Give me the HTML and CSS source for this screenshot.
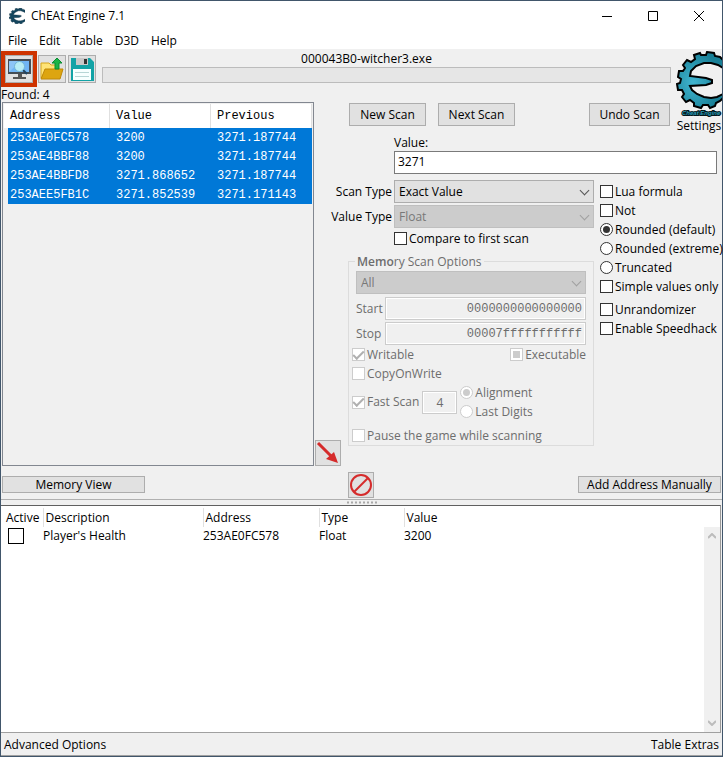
FILE: index.html
```html
<!DOCTYPE html>
<html lang="en">
<head>
<meta charset="utf-8">
<title>ChEAt Engine 7.1</title>
<link rel="stylesheet" href="styles.css">
</head>
<body>
<svg class="defs" width="0" height="0" aria-hidden="true">
  <symbol id="gear" viewBox="0 0 46 56">
    <path d="M46 8 43 5 38 4 37 1 30 0 29 3 24 3 23 1 17 3 18 7 14 10 10 8 6 13 8 16 6 19 2 19 1 25 4 27 3 31 0 32 1 38 5 38 7 42 5 45 9 50 13 48 17 51 17 54 24 56 26 53 31 53 33 56 38 54 39 51 43 49 46 46 46 39 40 43 34 45 27 45 20 42 15 38 14 34 29 33 35 30 35 26 29 25 13 24 15 18 20 14 27 10 34 10 41 13 46 16Z"/>
  </symbol>
</svg>
<div class="window">
  <header class="titlebar">
    <svg class="app-icon" viewBox="0 0 46 56" preserveAspectRatio="none"><use href="#gear" fill="#14465e" stroke="#0b2738" stroke-width="1"/></svg>
    <h1>ChEAt Engine 7.1</h1>
    <button class="caption" aria-label="Minimize"><svg width="10" height="10"><path d="M0 5.5H10" stroke="#000"/></svg></button>
    <button class="caption" aria-label="Maximize"><svg width="10" height="10"><path d="M.5.5H9.5V9.5H.5Z" fill="none" stroke="#000"/></svg></button>
    <button class="caption" aria-label="Close"><svg width="10" height="10"><path d="M0 0 10 10M10 0 0 10" stroke="#000"/></svg></button>
  </header>
  <nav class="menu">
    <button>File</button><button>Edit</button><button>Table</button><button>D3D</button><button>Help</button>
  </nav>

  <main class="scanner">
    <section class="toolbar">
      <div class="tools">
        <span class="highlight"><button class="tool" aria-label="Open process"><svg width="24" height="24" viewBox="0 0 24 24"><path d="M1 2H24V17H1Z" fill="#444d55"/><path d="M2 4H22V15H2Z" fill="#70b5f5"/><path d="M2 15 14 4H2Z" fill="#8dc5f7"/><path d="M11 17h4v3h4v2H6v-2h5Z" fill="#555"/><path d="m16 13 4 4" stroke="#22445f" stroke-width="2"/><circle cx="12.500" cy="9.500" r="5" fill="#b8edf5" stroke="#72b7d7"/></svg></button></span>
        <button class="tool" aria-label="Open file"><svg width="24" height="24" viewBox="0 0 24 24"><path d="M1 21V6h8l2 2h7v5Z" fill="#ffe477" stroke="#d5a51d"/><path d="M1 22 5 12H23L20 22Z" fill="#dda510" stroke="#bf8808"/><path d="M15 12V6H12L17 1 22 6H19v6Z" fill="#19b447" stroke="#0b8c31"/></svg></button>
        <button class="tool" aria-label="Save"><svg width="24" height="24" viewBox="0 0 24 24"><path d="M1 1H20L24 5V24H1Z" fill="#12a3a6"/><path d="M6 1H18V8H6Z" fill="#c9c9c9"/><path d="M14 2h3v5h-3Z" fill="#333"/><path d="M3 12H21V23H3Z" fill="#f7ffff"/><path d="M5 15.500H19M5 19.500H19" stroke="#b7d6d6"/></svg></button>
      </div>
      <div class="process">
        <span id="proc">000043B0-witcher3.exe</span>
        <div class="progress" role="progressbar" aria-labelledby="proc"></div>
      </div>
      <p class="found">Found: 4</p>
    </section>

    <a class="settings" href="#settings">
      <svg width="46" height="67" viewBox="0 0 46 67">
        <defs><radialGradient id="teal" cx=".35" cy=".55" r=".6"><stop offset="0" stop-color="#41b4cf"/><stop offset="1" stop-color="#187f96"/></radialGradient></defs>
        <g transform="translate(1 1)"><path d="M46 8 43 5 38 4 37 1 30 0 29 3 24 3 23 1 17 3 18 7 14 10 10 8 6 13 8 16 6 19 2 19 1 25 4 27 3 31 0 32 1 38 5 38 7 42 5 45 9 50 13 48 17 51 17 54 24 56 26 53 31 53 33 56 38 54 39 51 43 49 46 46 46 42 40 45 34 46 27 45 20 42 15 38 13 34 29 33 35 31 35 28 29 26 13 24 14 19 19 14 27 11 34 11 41 13 46 16Z" fill="url(#teal)" stroke="#000" stroke-width="2"/></g>
        <text class="logo-text" x="6" y="64">Cheat Engine</text>
      </svg>
      <span>Settings</span>
    </a>

    <section class="results">
      <div class="list">
        <table>
          <thead><tr><th>Address</th><th>Value</th><th>Previous</th></tr></thead>
          <tbody>
            <tr><td>253AE0FC578</td><td>3200</td><td>3271.187744</td></tr>
            <tr><td>253AE4BBF88</td><td>3200</td><td>3271.187744</td></tr>
            <tr><td>253AE4BBFD8</td><td>3271.868652</td><td>3271.187744</td></tr>
            <tr><td>253AEE5FB1C</td><td>3271.852539</td><td>3271.171143</td></tr>
          </tbody>
        </table>
      </div>
      <button class="square" aria-label="Add selected addresses"><svg width="24" height="24" viewBox="0 0 24 24"><path d="M2 2 16 16" stroke="#d52b2b" stroke-width="3"/><path d="M10 18 18 11 22 22Z" fill="#d52b2b"/></svg></button>
    </section>

    <div class="actions">
      <button class="btn">New Scan</button><button class="btn">Next Scan</button><button class="btn undo">Undo Scan</button>
    </div>

    <form class="form">
      <div class="value-box"><label for="val">Value:</label><input id="val" type="text" value="3271"></div>
      <div class="columns">
        <div class="scan">
          <div class="pick"><label for="st">Scan Type</label><span class="drop"><select id="st"><option>Exact Value</option></select></span></div>
          <div class="pick"><label for="vt">Value Type</label><span class="drop"><select id="vt" disabled><option>Float</option></select></span></div>
          <label class="check compare"><input type="checkbox">Compare to first scan</label>
          <fieldset disabled>
            <legend><b>Memo</b>ry Scan Options</legend>
            <span class="drop"><select aria-label="Region"><option>All</option></select></span>
            <div class="range"><label for="start">Start</label><input id="start" type="text" value="0000000000000000"></div>
            <div class="range"><label for="stop">Stop</label><input id="stop" type="text" value="00007fffffffffff"></div>
            <div class="pair"><label class="check"><input type="checkbox" checked>Writable</label><label class="check"><input class="mixed" type="checkbox">Executable</label></div>
            <label class="check"><input type="checkbox">CopyOnWrite</label>
            <div class="fast">
              <label class="check"><input type="checkbox" checked>Fast Scan</label>
              <input class="align" type="text" value="4" aria-label="Alignment size">
              <div><label class="check"><input type="radio" name="a" checked>Alignment</label><label class="check"><input type="radio" name="a">Last Digits</label></div>
            </div>
            <label class="check pause"><input type="checkbox">Pause the game while scanning</label>
          </fieldset>
        </div>
        <div class="options">
          <label class="check"><input type="checkbox">Lua formula</label>
          <label class="check"><input type="checkbox">Not</label>
          <label class="check"><input type="radio" name="r" checked>Rounded (default)</label>
          <label class="check"><input type="radio" name="r">Rounded (extreme)</label>
          <label class="check"><input type="radio" name="r">Truncated</label>
          <label class="check"><input type="checkbox">Simple values only</label>
          <label class="check apart"><input type="checkbox">Unrandomizer</label>
          <label class="check"><input type="checkbox">Enable Speedhack</label>
        </div>
      </div>
    </form>
  </main>

  <div class="midbar">
    <button class="btn wide">Memory View</button>
    <button class="square" aria-label="Clear list"><svg width="24" height="24" viewBox="0 0 24 24"><g fill="none" stroke="#d52b2b" stroke-width="2"><circle cx="12" cy="12" r="10"/><path d="M5 19 19 5"/></g></svg></button>
    <button class="btn wide">Add Address Manually</button>
  </div>
  <div class="splitter"><svg width="30" height="3"><path d="M0 1.500H30" stroke="#a8a8a8" stroke-width="2" stroke-dasharray="2 2"/></svg></div>

  <section class="cheats">
    <table>
      <thead><tr><th>Active</th><th>Description</th><th>Address</th><th>Type</th><th>Value</th></tr></thead>
      <tbody><tr><td><input type="checkbox" aria-label="Active"></td><td>Player's Health</td><td>253AE0FC578</td><td>Float</td><td>3200</td></tr></tbody>
    </table>
    <div class="scrollbar"><svg width="8" height="6"><path d="M0 5 4 1 8 5" /></svg><svg width="8" height="6"><path d="M0 1 4 5 8 1"/></svg></div>
  </section>
  <footer class="status"><a href="#advanced">Advanced Options</a><a href="#extras">Table Extras</a></footer>
</div>
</body>
</html>
```
FILE: styles.css
```css
* { box-sizing: border-box; }
body { margin: 0; }
body, button, input, select { font: 12px/16px "Open Sans", "Noto Sans", sans-serif; color: #000; }
button, input, select, fieldset { margin: 0; padding: 0; border: 0; background: none; border-radius: 0; }
a { color: inherit; text-decoration: none; }
svg { display: block; }
.defs { position: absolute; }

.window { display: flex; flex-direction: column; min-height: 100vh; border: 1px solid #41566b; background: #f0f0f0; white-space: nowrap; }

.titlebar { display: flex; align-items: center; height: 30px; padding-left: 8px; background: #fff; }
.titlebar h1 { flex: 1; margin: 0 0 0 6px; font-size: 12px; font-weight: 400; }
.app-icon { width: 16px; height: 16px; }
.caption { display: grid; place-items: center; width: 46px; height: 28px; }
.menu { display: flex; gap: 12px; height: 18px; padding: 2px 0 0 7px; background: #fff; }

.scanner { flex: none; display: grid; grid-template-columns: 340px 1fr 46px; grid-template-rows: 53px 32px auto; }
.toolbar { grid-column: 1 / 3; display: grid; grid-template-columns: auto 1fr; grid-template-rows: 38px 15px; column-gap: 6px; padding-right: 5px; }
.tools { display: flex; align-items: center; gap: 2px; padding-top: 2px; }
.highlight { margin-right: -1px; border: 4px solid #ce3300; }
.tool { display: grid; place-items: center; width: 28px; height: 28px; border: 1px solid #adadad; background: #e1e1e1; }
.process { text-align: center; padding-top: 2px; }
.process span { display: block; margin-right: 40px; }
.progress { height: 16px; border: 1px solid #bcbcbc; background: #e6e6e6; }
.found { margin: 0; line-height: 15px; }
.settings { grid-row: 1 / 3; grid-column: 3; display: flex; flex-direction: column; align-items: center; padding-top: 2px; }
.logo-text { font: italic bold 6px "Liberation Sans", sans-serif; fill: #2b9db5; stroke: #02151b; stroke-width: 2px; paint-order: stroke; }

.results { grid-row: 2 / 4; display: flex; align-items: flex-end; gap: 1px; padding-left: 1px; }
.list { flex: 1; min-width: 0; align-self: stretch; height: 364px; border: 1px solid #828790; padding: 1px 1px 0; }
.list table { width: 100%; border-collapse: separate; border-spacing: 0; table-layout: fixed; font: 12px/16px "Liberation Mono", monospace; }
.list th { height: 24px; padding: 0 0 0 6px; border-right: 1px solid #e0e0e0; background: #fff; font-weight: 400; text-align: left; }
.list th:nth-child(1) { width: 106px; }
.list th:nth-child(2) { width: 101px; }
.list td { height: 19px; padding: 0 0 0 6px; background: #0078d7; color: #fff; }
.list td:first-child { border-left: 4px solid #f0f0f0; padding-left: 2px; }
.square { flex: none; display: grid; place-items: center; width: 26px; height: 26px; border: 1px solid #adadad; background: #e1e1e1; }

.btn { min-width: 77px; height: 23px; border: 1px solid #adadad; background: #e1e1e1; }
.actions { grid-column: 2; display: flex; gap: 12px; padding: 1px 6px 0 8px; }
.undo { min-width: 81px; margin-left: auto; }

.form { grid-column: 2 / 4; }
.value-box { display: flex; flex-direction: column; padding: 1px 5px 0 53px; }
.value-box input { height: 23px; padding: 0 3px 2px; border: 1px solid #7a7a7a; background: #fff; }
.columns { display: flex; gap: 6px; margin-top: 6px; }
.scan { flex: 1; }
.pick { display: flex; align-items: center; gap: 2px; margin-bottom: 2px; }
.pick label { width: 51px; display: flex; justify-content: flex-end; }
.pick .drop { flex: 1; }
.drop { position: relative; display: block; height: 23px; }
.drop select { appearance: none; width: 100%; height: 100%; padding-left: 4px; border: 1px solid #adadad; background: #e1e1e1; }
.drop select:disabled { border-color: #bfbfbf; background: #ccc; color: #787878; opacity: 1; }
.drop::after { content: ""; position: absolute; right: 6px; top: 7px; width: 6px; height: 6px; border: solid #555; border-width: 0 1px 1px 0; transform: rotate(45deg); }
.drop:has(:disabled)::after { border-color: #a0a0a0; }

.check { display: flex; align-items: center; gap: 2px; height: 19px; }
.compare { height: 17px; padding-left: 53px; }
input[type=checkbox], input[type=radio] { appearance: none; flex: none; display: grid; place-items: center; width: 13px; height: 13px; border: 1px solid #333; background: #fff; }
input[type=radio] { border-radius: 50%; }
input[type=radio]:checked::before { content: ""; width: 7px; height: 7px; border-radius: 50%; background: #333; }
input[type=checkbox]:checked::before { content: ""; width: 9px; height: 4px; border: solid #b0b0b0; border-width: 0 0 2px 2px; transform: translateY(-1px) rotate(-45deg); }
input.mixed::before { content: ""; width: 7px; height: 7px; background: #ccc; }

fieldset { min-width: 0; margin: 5px 0 0 7px; padding: 0 7px; border: 1px solid #dcdcdc; color: #6d6d6d; }
fieldset input[type=checkbox], fieldset input[type=radio] { border-color: #ccc; }
fieldset input[type=radio]:checked::before { background: #ccc; }
legend { padding: 0 2px; margin-left: -1px; line-height: 19px; }
legend b { font-weight: 600; }
fieldset .drop { margin-bottom: 3px; }
fieldset .check { margin-left: -4px; }
.range { display: flex; align-items: center; }
.range + .range { margin-top: 2px; }
.range label { width: 29px; }
.range input, .align { height: 23px; border: 1px solid #ccc; outline: 1px solid #fff; outline-offset: -2px; background: #f0f0f0; color: #6d6d6d; }
.range input { flex: 1; min-width: 0; padding-right: 3px; font-family: "Liberation Mono", monospace; text-align: right; }
.pair { display: flex; justify-content: space-between; }
.fast { display: flex; align-items: center; gap: 3px; }
.align { width: 35px; text-align: center; }
.fast div .check { margin-left: 0; }
.pause { margin-top: 5px; }

.options { margin-top: 2px; width: 122px; }
.apart { margin-top: 4px; }

.midbar { display: grid; grid-template-columns: 1fr auto 1fr; align-items: center; height: 33px; padding: 4px 1px 0 0; }
.wide { width: 143px; height: 17px; margin-left: 1px; line-height: 15px; }
.wide:last-child { justify-self: end; }
.splitter { display: flex; justify-content: center; align-items: center; height: 6px; border-top: 1px solid #b0b0b0; }

.cheats { flex: 1; display: flex; align-items: stretch; border-top: 1px solid #606060; border-right: 1px solid #999; border-bottom: 1px solid #a0a0a0; background: #fff; margin-right: 1px; }
.cheats table { flex: 1; align-self: flex-start; table-layout: fixed; border-collapse: collapse; margin-top: 2px; }
.cheats th { height: 19px; padding: 0 0 0 2px; border-left: 1px solid #e0e0e0; font-weight: 400; text-align: left; }
.cheats td { height: 18px; padding: 0; }
.cheats th:first-child { width: 42px; padding-left: 5px; border: 0; }
.cheats th:nth-child(2) { width: 160px; }
.cheats th:nth-child(3) { width: 116px; }
.cheats th:nth-child(4) { width: 85px; }
.cheats input[type=checkbox] { width: 16px; height: 16px; margin-left: 7px; border-color: #000; }
.scrollbar { display: flex; flex-direction: column; justify-content: space-between; align-items: center; width: 16px; margin-top: 21px; padding: 6px 0; background: #f0f0f0; }
.scrollbar path { fill: none; stroke: #bcbcbc; stroke-width: 2; }
.status { display: flex; justify-content: space-between; align-items: center; height: 23px; padding: 2px 3px 0; border-bottom: 1px solid #a0a0a0; }
```
